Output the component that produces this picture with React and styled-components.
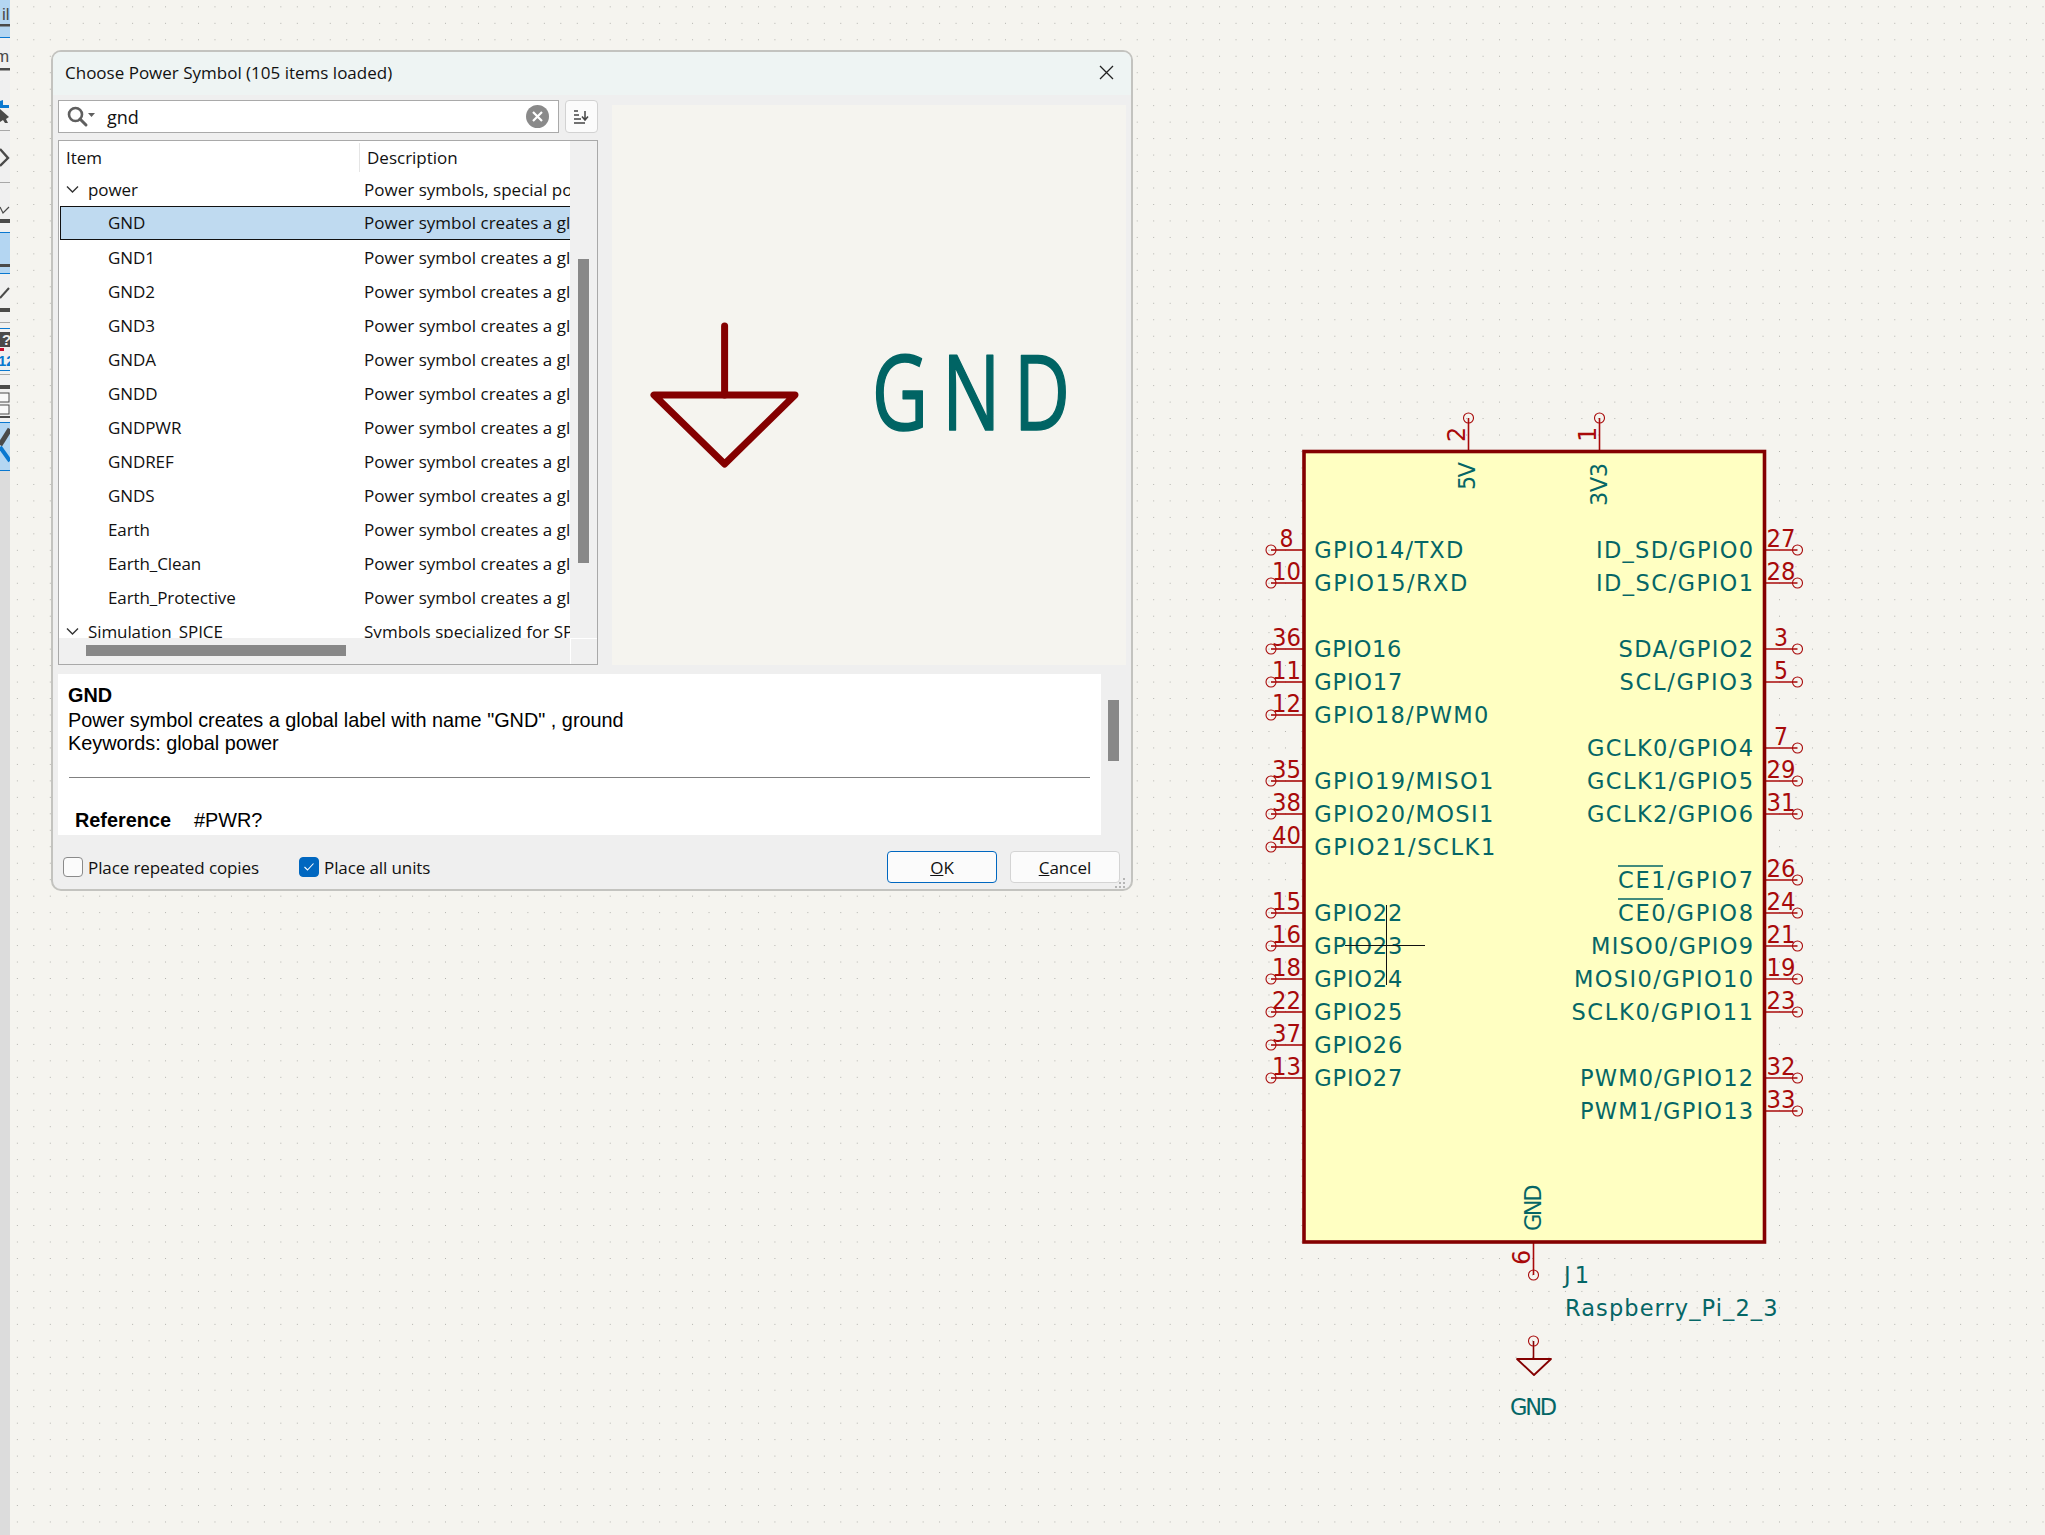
import React from 'react';
import styled, { createGlobalStyle } from 'styled-components';

const GlobalStyle = createGlobalStyle`
  html, body { margin: 0; padding: 0; background: #f5f4ef; }
  body { font-family: "Open Sans", "Noto Sans", sans-serif; color: #111; }
`;

const Page = styled.div`
  display: flex;
  width: 2045px;
  height: 1535px;
  overflow: hidden;
`;

const Toolbar = styled.div`
  width: 10px;
  flex: none;
  display: flex;
  flex-direction: column;
  background: #dcdcdc;
`;

const ToolSlice = styled.div`
  height: ${props => props.$h}px;
  box-sizing: border-box;
  background: ${props => (props.$active ? '#b4d6f2' : '#f0f0f0')};
  border-bottom: 1px solid ${props => props.$line || 'transparent'};
  overflow: hidden;
  svg { display: block; }
`;

const Canvas = styled.div`
  position: relative;
  flex: 1;
  background-color: #f5f4ef;
  background-image: radial-gradient(circle, #b0b0ab 0.6px, transparent 0.9px);
  background-size: 16.48px 16.48px;
  background-position: -0.9px -1.4px;
`;

const Dialog = styled.div`
  position: absolute;
  left: 41px;
  top: 50px;
  width: 1082px;
  height: 841px;
  box-sizing: border-box;
  border: 2px solid #c3c3bf;
  border-radius: 10px;
  background: #efefef;
  overflow: hidden;
  display: flex;
  flex-direction: column;
  font-size: 17px;
`;

const TitleBar = styled.div`
  height: 43px;
  flex: none;
  box-sizing: border-box;
  background: #eef4f3;
  display: flex;
  align-items: center;
  justify-content: space-between;
  padding: 0 17px 2px 12px;
`;

const Title = styled.span`
  font-size: 17px;
`;

const CloseIcon = styled.svg`
  width: 15px;
  height: 15px;
`;

const Body = styled.div`
  flex: 1;
  display: flex;
  flex-direction: column;
  padding: 5px 5px 0;
`;

const TopRow = styled.div`
  display: flex;
  height: 565px;
  flex: none;
`;

const LeftColumn = styled.div`
  width: 540px;
  display: flex;
  flex-direction: column;
  gap: 7px;
`;

const SearchRow = styled.div`
  display: flex;
  height: 33px;
  gap: 6px;
  flex: none;
`;

const SearchBox = styled.div`
  flex: 1;
  box-sizing: border-box;
  display: flex;
  align-items: center;
  background: #fff;
  border: 1px solid #a9a9a9;
  padding: 0 9px 0 8px;
`;

const SearchText = styled.span`
  flex: 1;
  margin-left: 10px;
  font-size: 18px;
`;

const SortButton = styled.div`
  width: 33px;
  box-sizing: border-box;
  background: #fbfbfb;
  border: 1px solid #d2d2d2;
  border-radius: 4px;
  display: flex;
  align-items: center;
  justify-content: center;
`;

const List = styled.div`
  flex: 1;
  box-sizing: border-box;
  min-height: 0;
  display: flex;
  flex-direction: column;
  background: #fff;
  border: 1px solid #a9a9a9;
`;

const ListMain = styled.div`
  flex: 1;
  min-height: 0;
  display: flex;
`;

const Columns = styled.div`
  flex: 1;
  min-width: 0;
  overflow: hidden;
`;

const HeaderRow = styled.div`
  height: 31px;
  display: grid;
  grid-template-columns: 300px 1fr;
  align-items: start;
`;

const HeaderCell = styled.div`
  height: 29px;
  margin-top: 2px;
  display: flex;
  align-items: center;
  padding-left: ${props => props.$pad}px;
  border-left: ${props => (props.$divided ? '1px solid #e5e5e5' : 'none')};
`;

const Row = styled.div`
  height: 34px;
  box-sizing: border-box;
  margin-left: 1px;
  display: grid;
  grid-template-columns: ${props => (props.$selected ? 303 : 304)}px 1fr;
  align-items: center;
  white-space: nowrap;
  overflow: hidden;
  background: ${props => (props.$selected ? '#bfdaf0' : 'transparent')};
  border: ${props => (props.$selected ? '1px solid #111' : 'none')};
  border-right: none;
  padding-bottom: ${props => (props.$selected ? '1px' : '0')};
`;

const ItemCell = styled.div`
  display: flex;
  align-items: center;
  letter-spacing: -0.1px;
  padding-left: ${props => (props.$group ? 6 : 48)}px;
`;

const SelectedItem = styled(ItemCell)`
  padding-left: 47px;
`;

const Chevron = styled.svg`
  width: 13px;
  height: 9px;
  margin-right: 9px;
  flex: none;
`;

const DescCell = styled.div`
  overflow: hidden;
  letter-spacing: 0.02px;
`;

const VScroll = styled.div`
  width: 27px;
  flex: none;
  background: #f0f0f0;
  padding-top: 118px;
  box-sizing: border-box;
  display: flex;
  justify-content: center;
`;

const VThumb = styled.div`
  width: 11px;
  height: 304px;
  background: #888;
`;

const HScroll = styled.div`
  height: 26px;
  flex: none;
  display: flex;
  background: #f0f0f0;
`;

const HTrack = styled.div`
  flex: 1;
  padding: 7px 0 0 27px;
`;

const HThumb = styled.div`
  width: 260px;
  height: 11px;
  background: #888;
`;

const Corner = styled.div`
  width: 27px;
  box-sizing: border-box;
  background: #f0f0f0;
  border: 1px solid #fff;
  border-right: none;
  border-bottom: none;
`;

const Preview = styled.div`
  width: 514px;
  margin: 5px 0 0 14px;
  background: #f5f4ef;
  svg { display: block; }
`;

const DetailRow = styled.div`
  display: flex;
  height: 161px;
  margin-top: 9px;
  flex: none;
`;

const Details = styled.div`
  width: 1043px;
  box-sizing: border-box;
  background: #fff;
  padding: 10px 11px 0 10px;
  font-family: "Liberation Sans", Arial, sans-serif;
  font-size: 19.85px;
  line-height: 23.5px;
  color: #000;
  overflow: hidden;
`;

const DetailName = styled.div`
  font-weight: 700;
  margin-bottom: 1px;
`;

const Rule = styled.div`
  height: 1px;
  background: #808080;
  margin: 21px 0 31px 1px;
`;

const FieldRow = styled.div`
  display: flex;
  padding-left: 7px;
`;

const FieldName = styled.span`
  font-weight: 700;
  width: 119px;
`;

const DetailScroll = styled.div`
  width: 11px;
  height: 61px;
  margin: 26px 0 0 7px;
  background: #888;
`;

const Footer = styled.div`
  flex: 1;
  position: relative;
  display: flex;
  align-items: center;
  padding: 10px 6px 0 5px;
`;

const CheckItem = styled.label`
  display: flex;
  align-items: center;
  gap: 5px;
  letter-spacing: -0.1px;
  margin-right: ${props => props.$gap || 0}px;
`;

const CheckBox = styled.span`
  width: 20px;
  height: 20px;
  box-sizing: border-box;
  border-radius: 4px;
  background: ${props => (props.$checked ? '#0067c0' : '#fbfbfb')};
  border: 1px solid ${props => (props.$checked ? '#0067c0' : '#8a8a8a')};
  display: flex;
  align-items: center;
  justify-content: center;
`;

const Spacer = styled.div`
  flex: 1;
`;

const Button = styled.div`
  width: 110px;
  height: 32px;
  box-sizing: border-box;
  margin-left: ${props => props.$gap || 0}px;
  background: #fbfbfb;
  border: 1px solid ${props => (props.$primary ? '#0067c0' : '#d4d4d4')};
  border-radius: 4px;
  display: flex;
  align-items: center;
  justify-content: center;
`;

const Grip = styled.svg`
  position: absolute;
  right: 0;
  bottom: 0;
  width: 12px;
  height: 12px;
`;

const Schematic = styled.svg`
  position: absolute;
  left: 1250px;
  top: 400px;
  font-family: "DejaVu Sans", sans-serif;
`;

const LabelText = styled.text`
  fill: #056666;
  font-size: 22.5px;
`;

const PinNumber = styled.text`
  fill: #a80a0a;
  font-size: 24px;
`;

const rows = ['GND', 'GND1', 'GND2', 'GND3', 'GNDA', 'GNDD', 'GNDPWR', 'GNDREF', 'GNDS', 'Earth', 'Earth_Clean', 'Earth_Protective'];
const DESC = 'Power symbol creates a global label with name';

const rowY = n => 550 + 33 * n;

// number, row, label, label width
const leftPins = [
  ['8', 0, 'GPIO14/TXD', 149],
  ['10', 1, 'GPIO15/RXD', 153],
  ['36', 3, 'GPIO16', 87],
  ['11', 4, 'GPIO17', 88],
  ['12', 5, 'GPIO18/PWM0', 174],
  ['35', 7, 'GPIO19/MISO1', 179],
  ['38', 8, 'GPIO20/MOSI1', 179],
  ['40', 9, 'GPIO21/SCLK1', 181],
  ['15', 11, 'GPIO22', 88],
  ['16', 12, 'GPIO23', 88],
  ['18', 13, 'GPIO24', 88],
  ['22', 14, 'GPIO25', 88],
  ['37', 15, 'GPIO26', 88],
  ['13', 16, 'GPIO27', 88],
];

// number, row, label, label start
const rightPins = [
  ['27', 0, 'ID_SD/GPIO0', 1596],
  ['28', 1, 'ID_SC/GPIO1', 1596],
  ['3', 3, 'SDA/GPIO2', 1618.6],
  ['5', 4, 'SCL/GPIO3', 1619.6],
  ['7', 6, 'GCLK0/GPIO4', 1587],
  ['29', 7, 'GCLK1/GPIO5', 1587],
  ['31', 8, 'GCLK2/GPIO6', 1587],
  ['26', 10, 'CE1/GPIO7', 1618],
  ['24', 11, 'CE0/GPIO8', 1618],
  ['21', 12, 'MISO0/GPIO9', 1591],
  ['19', 13, 'MOSI0/GPIO10', 1574],
  ['23', 14, 'SCLK0/GPIO11', 1571.4],
  ['32', 16, 'PWM0/GPIO12', 1580],
  ['33', 17, 'PWM1/GPIO13', 1580],
];

const RED = '#a80a0a';
const BOX = '#840000';
const TEAL = '#056666';

const PinLine = ({ x1, y1, x2, y2 }) => (
  <g stroke={RED} fill="none">
    <line x1={x1} y1={y1} x2={x2} y2={y2} strokeWidth="1.6" />
    <circle cx={x2} cy={y2} r="5" strokeWidth="1.1" />
  </g>
);

const SideNumber = ({ n, y, cx }) => (
  <PinNumber
    x={cx - (n.length > 1 ? 14.5 : 7)}
    y={y - 3.5}
    textLength={n.length > 1 ? 29 : 14}
    lengthAdjust="spacingAndGlyphs"
  >
    {n}
  </PinNumber>
);

const UpText = ({ Comp, x, y, len, children }) => (
  <Comp
    transform={`rotate(-90 ${x} ${y})`}
    x={x}
    y={y}
    textLength={len}
  >
    {children}
  </Comp>
);

const SchematicDrawing = () => (
  <Schematic width="560" height="1040" viewBox="1260 400 560 1040">
    {leftPins.map(([n, r]) => (
      <PinLine key={n} x1={1303} y1={rowY(r)} x2={1271} y2={rowY(r)} />
    ))}
    {rightPins.map(([n, r]) => (
      <PinLine key={n} x1={1764} y1={rowY(r)} x2={1797.5} y2={rowY(r)} />
    ))}
    <PinLine x1={1468.5} y1={451} x2={1468.5} y2={418} />
    <PinLine x1={1599.5} y1={451} x2={1599.5} y2={418} />
    <PinLine x1={1533.5} y1={1242} x2={1533.5} y2={1275} />

    <rect x="1304" y="451.5" width="460.5" height="790.5" fill="#ffffc2" stroke={BOX} strokeWidth="3.6" />

    {leftPins.map(([n, r, label, w]) => (
      <g key={n}>
        <SideNumber n={n} y={rowY(r)} cx={1286.5} />
        <LabelText x={1314.3} y={rowY(r) + 8} textLength={w}>{label}</LabelText>
      </g>
    ))}
    {rightPins.map(([n, r, label, x]) => (
      <g key={n}>
        <SideNumber n={n} y={rowY(r)} cx={1781} />
        <LabelText x={x} y={rowY(r) + 8} textLength={1753 - x}>{label}</LabelText>
      </g>
    ))}

    <line x1="1618" y1="866" x2="1663" y2="866" stroke={TEAL} strokeWidth="1.6" />
    <line x1="1618" y1="899" x2="1663" y2="899" stroke={TEAL} strokeWidth="1.6" />

    <UpText Comp={PinNumber} x={1465} y={442} len={14}>2</UpText>
    <UpText Comp={PinNumber} x={1596} y={442} len={14}>1</UpText>
    <UpText Comp={PinNumber} x={1530} y={1265} len={13}>6</UpText>
    <UpText Comp={LabelText} x={1475} y={490} len={28}>5V</UpText>
    <UpText Comp={LabelText} x={1607} y={506} len={43}>3V3</UpText>
    <UpText Comp={LabelText} x={1541} y={1231} len={46.5}>GND</UpText>

    <LabelText x={1564} y={1283} textLength={25}>J1</LabelText>
    <LabelText x={1565} y={1316} textLength={212.5}>Raspberry_Pi_2_3</LabelText>

    <line x1="1533.5" y1="1341" x2="1533.5" y2="1359" stroke={BOX} strokeWidth="1.6" />
    <circle cx="1533.5" cy="1341" r="5" fill="none" stroke={RED} strokeWidth="1.1" />
    <path d="M1517 1359 H1551 L1534 1375 Z" fill="none" stroke={BOX} strokeWidth="1.8" strokeLinejoin="round" />
    <LabelText x={1510} y={1415} textLength={47}>GND</LabelText>

    <g stroke="#111" strokeWidth="1" shapeRendering="crispEdges">
      <line x1="1386" y1="905" x2="1386" y2="985" />
      <line x1="1345" y1="945" x2="1425" y2="945" />
    </g>
  </Schematic>
);

const PreviewSymbol = () => (
  <svg width="514" height="560" viewBox="612 105 514 560">
    <g fill="none" stroke="#840000" strokeWidth="7" strokeLinecap="round" strokeLinejoin="round">
      <line x1="724.6" y1="326" x2="724.6" y2="395" />
      <path d="M654 395 H795 L724.6 464 Z" />
    </g>
    {/* narrow wide-set letters, closest to the stroke font of the symbol */}
    <text
      transform="translate(0 430) scale(0.74 1)"
      x="1178 1273 1370"
      y="0"
      fill="#006464"
      stroke="#006464"
      strokeWidth="1.6"
      strokeLinejoin="round"
      fontFamily="Open Sans, sans-serif"
      fontSize="105"
    >
      GND
    </text>
  </svg>
);

const Slice = ({ h, active, line, children }) => (
  <ToolSlice $h={h} $active={active} $line={line}>
    <svg width="10" height={h} viewBox={`0 0 10 ${h}`}>{children}</svg>
  </ToolSlice>
);

const DARK = '#4a4a4a';
const BLUE = '#0a78d0';
const GREY = '#a8a8a8';

const LeftTools = () => (
  <Toolbar>
    <Slice h={38} active line={BLUE}>
      <text x="2" y="20" fontSize="17" fontFamily="Liberation Sans, sans-serif" fill={DARK}>il</text>
      <rect x="0" y="24" width="10" height="2.5" fill={DARK} />
    </Slice>
    <Slice h={37}>
      <text x="-5" y="24" fontSize="17" fontFamily="Liberation Sans, sans-serif" fill={DARK}>m</text>
      <rect x="0" y="30" width="10" height="2.5" fill={DARK} />
    </Slice>
    <Slice h={56} line={GREY}>
      <path d="M0 26 L3 25 V30 H9 V33 H0 Z" fill={BLUE} />
      <path d="M0 34 L9 42 L6 44 L8 48 L5 48 L3 45 L0 47 Z" fill={DARK} />
    </Slice>
    <Slice h={52} line={GREY}>
      <path d="M0 18 L8 27 L0 35" fill="none" stroke={DARK} strokeWidth="2.4" />
    </Slice>
    <Slice h={50} line={BLUE}>
      <path d="M0 24 L3 30 L9 24" fill="none" stroke={DARK} strokeWidth="1.2" />
      <rect x="0" y="36" width="10" height="4" fill={DARK} />
    </Slice>
    <Slice h={41} active line={BLUE}>
      <rect x="0" y="31" width="10" height="3" fill={DARK} />
    </Slice>
    <Slice h={49} line={GREY}>
      <path d="M0 24 L9 14" fill="none" stroke={DARK} strokeWidth="2" />
      <rect x="0" y="34" width="10" height="4" fill={DARK} />
    </Slice>
    <Slice h={52} line={GREY}>
      <rect x="0" y="5" width="10" height="1" fill={BLUE} />
      <rect x="0" y="9" width="10" height="15" fill={DARK} />
      <text x="2" y="22" fontSize="15" fontWeight="700" fontFamily="Liberation Sans, sans-serif" fill="#eee">?</text>
      <rect x="0" y="25" width="4" height="3" fill="#c8102e" />
      <text x="-2" y="43" fontSize="15" fontWeight="700" fontFamily="Liberation Sans, sans-serif" fill={BLUE}>12</text>
      <rect x="0" y="47" width="10" height="1" fill={BLUE} />
    </Slice>
    <Slice h={48} line={BLUE}>
      <rect x="0" y="10" width="10" height="4" fill={DARK} />
      <rect x="-2" y="18" width="11" height="9" fill="#f8f8f8" stroke={DARK} strokeWidth="1" />
      <rect x="-2" y="30" width="11" height="9" fill="#f8f8f8" stroke={DARK} strokeWidth="1" />
      <rect x="0" y="41" width="10" height="2" fill={DARK} />
    </Slice>
    <Slice h={48} active line={BLUE}>
      <path d="M10 6 L0 22" stroke={DARK} strokeWidth="5" fill="none" />
      <path d="M0 24 L10 38" stroke={BLUE} strokeWidth="4" fill="none" />
    </Slice>
  </Toolbar>
);

const GroupChevron = () => (
  <Chevron viewBox="0 0 13 9">
    <path d="M1 1.5 L6.5 7 L12 1.5" stroke="#333" strokeWidth="1.4" fill="none" />
  </Chevron>
);

const App = () => (
  <Page>
    <GlobalStyle />
    <LeftTools />
    <Canvas>
      <SchematicDrawing />
      <Dialog>
        <TitleBar>
          <Title>Choose Power Symbol (105 items loaded)</Title>
          <CloseIcon viewBox="0 0 15 15">
            <path d="M1 1 L14 14 M14 1 L1 14" stroke="#222" strokeWidth="1.3" fill="none" />
          </CloseIcon>
        </TitleBar>
        <Body>
          <TopRow>
            <LeftColumn>
              <SearchRow>
                <SearchBox>
                  <svg width="30" height="22" viewBox="0 0 30 22">
                    <circle cx="8.5" cy="8.5" r="6.5" fill="none" stroke="#5f5f5f" strokeWidth="2.6" />
                    <path d="M13 13 L19 19" stroke="#5f5f5f" strokeWidth="3" strokeLinecap="round" />
                    <path d="M21 7 H28 L24.5 11 Z" fill="#5f5f5f" />
                  </svg>
                  <SearchText>gnd</SearchText>
                  <svg width="23" height="23" viewBox="0 0 23 23">
                    <circle cx="11.5" cy="11.5" r="11.5" fill="#8a8a8a" />
                    <path d="M7 7 L16 16 M16 7 L7 16" stroke="#fff" strokeWidth="2.2" />
                  </svg>
                </SearchBox>
                <SortButton>
                  <svg width="16" height="14" viewBox="0 0 16 14">
                    <path d="M0 1 H4 M0 5 H5 M0 9 H7 M0 13 H11" stroke="#444" strokeWidth="1.6" />
                    <path d="M11 1 V9 M8 6.5 L11 10 L14 6.5" stroke="#444" strokeWidth="1.5" fill="none" />
                  </svg>
                </SortButton>
              </SearchRow>
              <List>
                <ListMain>
                  <Columns>
                    <HeaderRow>
                      <HeaderCell $pad={7}>Item</HeaderCell>
                      <HeaderCell $pad={7} $divided>Description</HeaderCell>
                    </HeaderRow>
                    <Row>
                      <ItemCell $group>
                        <GroupChevron />
                        power
                      </ItemCell>
                      <DescCell>Power symbols, special power</DescCell>
                    </Row>
                    {rows.map((name, i) => (
                      <Row key={name} $selected={i === 0}>
                        {i === 0 ? <SelectedItem>{name}</SelectedItem> : <ItemCell>{name}</ItemCell>}
                        <DescCell>{DESC}</DescCell>
                      </Row>
                    ))}
                    <Row>
                      <ItemCell $group>
                        <GroupChevron />
                        Simulation_SPICE
                      </ItemCell>
                      <DescCell>Symbols specialized for SPICE</DescCell>
                    </Row>
                  </Columns>
                  <VScroll><VThumb /></VScroll>
                </ListMain>
                <HScroll>
                  <HTrack><HThumb /></HTrack>
                  <Corner />
                </HScroll>
              </List>
            </LeftColumn>
            <Preview><PreviewSymbol /></Preview>
          </TopRow>
          <DetailRow>
            <Details>
              <DetailName>GND</DetailName>
              <div>Power symbol creates a global label with name "GND" , ground</div>
              <div>Keywords: global power</div>
              <Rule />
              <FieldRow>
                <FieldName>Reference</FieldName>
                <span>#PWR?</span>
              </FieldRow>
            </Details>
            <DetailScroll />
          </DetailRow>
          <Footer>
            <CheckItem $gap={40}>
              <CheckBox />
              Place repeated copies
            </CheckItem>
            <CheckItem>
              <CheckBox $checked>
                <svg width="12" height="10" viewBox="0 0 12 10">
                  <path d="M1.5 5 L4.5 8 L10.5 1.5" stroke="#fff" strokeWidth="1.1" fill="none" />
                </svg>
              </CheckBox>
              Place all units
            </CheckItem>
            <Spacer />
            <Button $primary><span><u>O</u>K</span></Button>
            <Button $gap={13}><span><u>C</u>ancel</span></Button>
            <Grip viewBox="0 0 12 12">
              <path d="M9 1 h2 v2 h-2 z M9 5 h2 v2 h-2 z M5 5 h2 v2 h-2 z M9 9 h2 v2 h-2 z M5 9 h2 v2 h-2 z M1 9 h2 v2 h-2 z" fill="#b5b5b5" />
            </Grip>
          </Footer>
        </Body>
      </Dialog>
    </Canvas>
  </Page>
);

export default App;
